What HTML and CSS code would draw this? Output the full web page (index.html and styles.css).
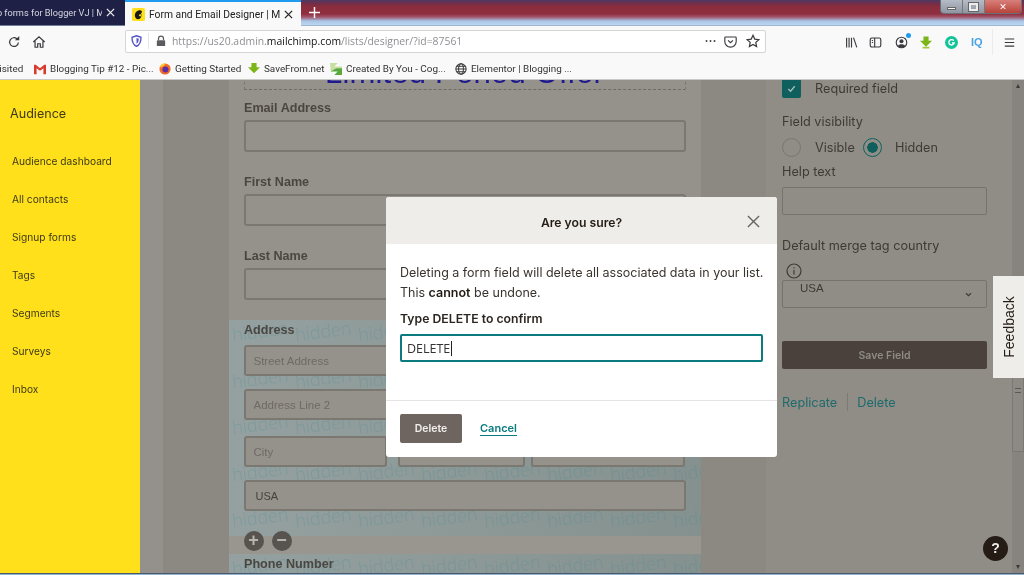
FILE: index.html
```html
<!DOCTYPE html>
<html lang="en">
<head>
<meta charset="utf-8">
<title>Form and Email Designer</title>
<link rel="stylesheet" href="styles.css">
</head>
<body>
<div class="page">
  <header class="chrome">
    <div class="tabstrip">
      <div class="tab-bg"><span class="tab-bg-title">Web forms for Blogger VJ | M</span><svg class="tab-x" viewBox="0 0 10 10"><path d="M1 1l8 8M9 1l-8 8"/></svg></div>
      <div class="tab-active">
        <svg class="favicon" viewBox="0 0 16 16"><rect width="16" height="16" rx="2" fill="#ffe01b"/><path d="M5 13c-2-2-2-6 0-8 2-2 6-3 7-1 1 1 0 2-1 2 1 2 1 5-1 7-1 1-4 1-5 0z" fill="#1c1a14"/><circle cx="10" cy="9" r="1.4" fill="#ffe01b"/></svg>
        <span class="tab-title">Form and Email Designer | Mail</span>
        <svg class="tab-x dark" viewBox="0 0 10 10"><path d="M1 1l8 8M9 1l-8 8"/></svg>
      </div>
      <svg class="newtab" viewBox="0 0 12 12"><path d="M6 0v12M0 6h12"/></svg>
      <div class="winctl">
        <span class="win win-min"><i></i></span>
        <span class="win win-max"><i></i></span>
        <span class="win win-close">✕</span>
      </div>
    </div>
    <div class="toolbar">
      <svg class="ico reload" viewBox="0 0 16 16"><path d="M13 8.500a5 5 0 1 1-1.500-4"/><path class="fill" d="M14 1v5H9z"/></svg>
      <svg class="ico home" viewBox="0 0 16 16"><path d="M1.500 8L8 2l6.500 6M3.500 7v7h3v-4h3v4h3V7"/></svg>
      <div class="urlbar">
        <svg class="shield" viewBox="0 0 14 16"><path d="M7 1l6 2c0 6-1 10-6 12C2 13 1 9 1 3z" fill="none" stroke="#5454c8" stroke-width="1.800"/><path d="M7 4l3 1c0 3-.5 5-3 6.500z" fill="#5454c8"/></svg>
        <span class="url-sep"></span>
        <svg class="lock" viewBox="0 0 12 14"><path d="M3 6V4a3 3 0 0 1 6 0v2" fill="none" stroke="#5c5c60" stroke-width="1.500"/><rect x="1" y="6" width="10" height="7" rx="1" fill="#5c5c60"/></svg>
        <span class="url"><span class="url-dim">https://us20.admin.</span>mailchimp.com<span class="url-dim">/lists/designer/?id=87561</span></span>
        <span class="url-end">
          <span class="dots">•••</span>
          <svg class="ico pocket" viewBox="0 0 16 16"><path d="M2 2.500h12a1 1 0 0 1 1 1V8a7 7 0 0 1-14 0V3.500a1 1 0 0 1 1-1zM5 6.500l3 3 3-3"/></svg>
          <svg class="ico star" viewBox="0 0 16 16"><path d="M8 1.500l2 4.300 4.700.6-3.500 3.200.9 4.700L8 12l-4.100 2.300.9-4.700-3.500-3.200 4.700-.6z"/></svg>
        </span>
      </div>
      <div class="tools">
        <svg class="ico tool-lib" viewBox="0 0 16 16"><path d="M2 2v12M5 2v12M8 2v12M10.500 2l4 12"/></svg>
        <svg class="ico tool-side" viewBox="0 0 16 16"><rect x="1.500" y="2.500" width="13" height="11" rx="2"/><path d="M7 2.500v11M3.500 5.500h1.500M3.500 8h1.500"/></svg>
        <span class="tool-avatar">
          <svg class="ico" viewBox="0 0 16 16"><circle cx="8" cy="8" r="6.500"/><circle class="fill" cx="8" cy="6.500" r="2.500"/><path class="fill" d="M3.500 12.500c1-3 8-3 9 0-2 2-7 2-9 0z"/></svg>
          <i class="badge-dot"></i>
        </span>
        <svg class="tool-green" viewBox="0 0 14 14"><path d="M4 0h6v5h4l-7 7-7-7h4z" fill="#7cb518"/><rect x="3" y="12" width="8" height="2" fill="#9ccc3c"/></svg>
        <span class="tool-gram"><svg viewBox="0 0 10 10"><path d="M7.500 3A3 3 0 1 0 8 5.500H5.500" fill="none" stroke="#fff" stroke-width="1.500"/></svg></span>
        <span class="tool-iq">IQ</span>
        <span class="tool-sep"></span>
        <svg class="ico tool-menu" viewBox="0 0 14 14"><path d="M1 2.500h12M1 7h12M1 11.500h12"/></svg>
      </div>
    </div>
    <nav class="bookmarks">
      <span class="bm bm-visited">Visited</span>
      <span class="bm bm-blog"><svg class="bm-ico" viewBox="0 0 14 12"><path d="M0 1h2l5 4 5-4h2v11h-3V5L7 8 3 5v7H0z" fill="#d93a2b"/></svg>Blogging Tip #12 - Pic...</span>
      <span class="bm bm-start"><svg class="bm-ico" viewBox="0 0 14 14"><circle cx="7" cy="7" r="6.500" fill="#f26a21"/><circle cx="7.500" cy="7.500" r="3.500" fill="#5a2ea6"/><path d="M1 5c1-3 4-5 7-4.500L6 3 3 5z" fill="#ffc83a"/></svg>Getting Started</span>
      <span class="bm bm-save"><svg class="bm-ico" viewBox="0 0 14 14"><path d="M4 0h6v5h4l-7 7-7-7h4z" fill="#7cb518"/></svg>SaveFrom.net</span>
      <span class="bm bm-made"><svg class="bm-ico" viewBox="0 0 14 14"><path d="M0 0h9L5 4h9v2H6L1 11z" fill="#c6e0a0"/><path d="M14 14H5l4-4H1l6-4 7 0z" fill="#58a83c"/></svg>Created By You - Cog...</span>
      <span class="bm bm-el"><svg class="bm-ico" viewBox="0 0 14 14"><g fill="none" stroke="#3a3a3a" stroke-width="1.200"><circle cx="7" cy="7" r="6"/><ellipse cx="7" cy="7" rx="2.800" ry="6"/><path d="M1 7h12M2 3.800h10M2 10.200h10"/></g></svg>Elementor | Blogging ...</span>
    </nav>
  </header>

  <main class="app">
    <aside class="side">
      <h2 class="side-title">Audience</h2>
      <ul class="side-list">
        <li>Audience dashboard</li>
        <li>All contacts</li>
        <li>Signup forms</li>
        <li>Tags</li>
        <li>Segments</li>
        <li>Surveys</li>
        <li>Inbox</li>
      </ul>
    </aside>
    <div class="gutter"></div>
    <section class="canvas">
      <form class="form">
        <div class="form-head">Limited Period Offer</div>
        <div class="field"><label class="flabel">Email Address</label><input class="finput" type="text"></div>
        <div class="field"><label class="flabel">First Name</label><input class="finput" type="text"></div>
        <div class="field last"><label class="flabel">Last Name</label><input class="finput" type="text"></div>
        <div class="hidden-block addr">
          <div class="wm">
            <span>hidden</span><span>hidden</span><span>hidden</span><span>hidden</span><span>hidden</span><span>hidden</span><span>hidden</span><span>hidden</span>
            <span>hidden</span><span>hidden</span><span>hidden</span><span>hidden</span><span>hidden</span><span>hidden</span><span>hidden</span><span>hidden</span>
            <span>hidden</span><span>hidden</span><span>hidden</span><span>hidden</span><span>hidden</span><span>hidden</span><span>hidden</span><span>hidden</span>
            <span>hidden</span><span>hidden</span><span>hidden</span><span>hidden</span><span>hidden</span><span>hidden</span><span>hidden</span><span>hidden</span>
            <span>hidden</span><span>hidden</span><span>hidden</span><span>hidden</span><span>hidden</span><span>hidden</span><span>hidden</span><span>hidden</span>
          </div>
          <label class="flabel addr-label">Address</label>
          <input class="finput addr-in first" type="text" placeholder="Street Address">
          <input class="finput addr-in second" type="text" placeholder="Address Line 2">
          <div class="addr-row">
            <input class="finput addr-in" type="text" placeholder="City">
            <input class="finput addr-in" type="text">
            <input class="finput addr-in" type="text">
          </div>
          <input class="finput addr-in country" type="text" value="USA">
        </div>
        <div class="plusminus">
          <span class="pm">+</span><span class="pm">−</span>
        </div>
        <div class="hidden-block phone">
          <div class="wm">
            <span>hidden</span><span>hidden</span><span>hidden</span><span>hidden</span><span>hidden</span><span>hidden</span><span>hidden</span><span>hidden</span>
          </div>
          <label class="flabel addr-label">Phone Number</label>
        </div>
      </form>
    </section>
    <aside class="panel">
      <div class="check-row">
        <span class="checkbox"><svg viewBox="0 0 12 12"><path d="M2.500 6.500l2.500 2.500 4.500-5.500"/></svg></span>
        <span class="ptext">Required field</span>
      </div>
      <div class="ptext vis-label">Field visibility</div>
      <div class="radio-row">
        <span class="radio"></span><span class="ptext r1">Visible</span>
        <span class="radio on"></span><span class="ptext r2">Hidden</span>
      </div>
      <div class="ptext help-label">Help text</div>
      <div class="pinput"></div>
      <div class="ptext merge-label">Default merge tag country</div>
      <svg class="info" viewBox="0 0 16 16"><circle cx="8" cy="8" r="7"/><path d="M8 7v4.500M8 4.200v1.300"/></svg>
      <div class="pselect"><span>USA</span><svg viewBox="0 0 8 6"><path d="M1 1.500l3 3 3-3"/></svg></div>
      <div class="save">Save Field</div>
      <div class="plinks"><span class="plink">Replicate</span><i class="plink-sep"></i><span class="plink">Delete</span></div>
    </aside>
    <div class="scrollbar">
      <span class="sb-arrow">▴</span>
      <div class="sb-thumb"><i></i></div>
      <span class="sb-arrow">▾</span>
    </div>

    <div class="feedback"><span>Feedback</span></div>
    <div class="helpbtn">?</div>
    <div class="modal">
      <div class="modal-head">
        <span class="modal-title">Are you sure?</span>
        <svg class="modal-x" viewBox="0 0 14 14"><path d="M1 1l12 12M13 1L1 13"/></svg>
      </div>
      <div class="modal-body">
        <p class="modal-text">Deleting a form field will delete all associated data in your list.<br>This <strong>cannot</strong> be undone.</p>
        <div class="modal-label">Type DELETE to confirm</div>
        <div class="modal-input">DELETE<i class="caret"></i></div>
      </div>
      <div class="modal-foot">
        <span class="btn-delete">Delete</span>
        <span class="btn-cancel">Cancel</span>
      </div>
    </div>
  </main>
  <div class="taskbar"></div>
</div>
</body>
</html>
```
FILE: styles.css
```css
* { box-sizing: border-box; }
html, body { margin: 0; padding: 0; background: #94908a; }
.page { width: 1024px; height: 575px; overflow: hidden; display: flex; flex-direction: column; filter: blur(.45px); }

/* browser chrome */
.chrome { flex: none; height: 80px; font-family: "Roboto", "Liberation Sans", sans-serif; color: #2a2a2e; background: #f9f9fa; }
.tabstrip { height: 26px; display: flex; align-items: stretch; position: relative; overflow: hidden;
  background: linear-gradient(to bottom, #4a3a66 0, #6e2f4a 3px, #8b2d3c 7px, #8f2f40 14px, #a0566c 17px, #a9c6e6 21px, #bcd6f0 25px, #7f98b4 26px); }
.tab-bg { width: 125px; background: #1f2045; color: #d6d6e2; display: flex; align-items: center; font-size: 9.200px; padding-right: 10px; border-bottom: 1px solid #6d7f9a; }
.tab-bg-title { flex: 1; white-space: nowrap; overflow: hidden; text-indent: -16px; }
.tab-x { width: 9px; height: 9px; margin-left: 4px; flex: none; fill: none; stroke: #eee; stroke-width: 1.400; }
.tab-x.dark { stroke: #222; }
.tab-active { width: 176px; background: #f9f9fa; border-top: 2px solid #1f9cf0; display: flex; align-items: center; padding: 0 8px 0 7px; }
.favicon { width: 13px; height: 13px; flex: none; margin-right: 4px; }
.tab-title { flex: 1; font-size: 10.300px; white-space: nowrap; overflow: hidden; color: #222; }
.newtab { width: 11px; height: 11px; margin: 7px 0 0 8px; fill: none; stroke: #fff; stroke-width: 1.600; }
.winctl { margin-left: auto; margin-right: 2px; width: 82px; height: 14px; display: flex; border: 1px solid #6a6f78; border-top: 0; border-radius: 0 0 4px 4px; overflow: hidden; }
.win { display: flex; align-items: center; justify-content: center; background: linear-gradient(#b6bcc6, #8f96a2); }
.win-min { width: 22px; border-right: 1px solid #777; }
.win-min i { width: 9px; height: 3px; background: #f4f4f4; border: 1px solid #666; margin-top: 4px; }
.win-max { width: 22px; border-right: 1px solid #777; }
.win-max i { width: 9px; height: 8px; border: 2px solid #ececec; outline: 1px solid #666; }
.win-close { flex: 1; background: linear-gradient(#d8807a, #b8433a); color: #fff; font-size: 9px; font-weight: 700; font-family: "DejaVu Sans", sans-serif; }

.toolbar { height: 32px; display: flex; align-items: center; background: #f9f9fa; }
.ico { fill: none; stroke: #3b3b3f; stroke-width: 1.400; }
.ico .fill { fill: #3b3b3f; stroke: none; }
.reload { width: 14px; height: 14px; margin-left: 7px; flex: none; }
.home { width: 14px; height: 14px; margin-left: 11px; flex: none; }
.urlbar { width: 641px; height: 23px; margin-left: 79px; flex: none; background: #fff; border: 1px solid #d4d4d6; border-radius: 2px; display: flex; align-items: center; padding-left: 5px; margin-top: -2px; }
.shield { width: 11px; height: 12px; flex: none; }
.url-sep { width: 1px; height: 16px; background: #e6e6e8; margin: 0 7px 0 6px; flex: none; }
.lock { width: 10px; height: 12px; flex: none; margin-right: 6px; }
.url { font-size: 10.400px; color: #111; white-space: nowrap; font-family: "Open Sans", sans-serif; }
.url-dim { color: #8f8f94; }
.url-end { margin-left: auto; display: flex; align-items: center; padding-right: 5px; }
.dots { font-size: 9px; color: #444; letter-spacing: 1px; margin-right: 7px; }
.pocket { width: 13px; height: 13px; margin-right: 9px; }
.star { width: 14px; height: 14px; }
.tools { display: flex; align-items: center; margin-left: 79px; flex: 1; height: 100%; }
.tool-lib { width: 13px; height: 13px; flex: none; }
.tool-side { width: 13px; height: 13px; margin-left: 11px; flex: none; }
.tool-avatar { position: relative; width: 13px; height: 13px; margin-left: 13px; flex: none; display: block; }
.tool-avatar svg { width: 13px; height: 13px; display: block; }
.badge-dot { position: absolute; right: -3px; top: -3px; width: 5px; height: 5px; border-radius: 50%; background: #1f9cf0; }
.tool-green { width: 12px; height: 13px; margin-left: 12px; flex: none; }
.tool-gram { width: 13px; height: 13px; border-radius: 50%; background: #15c39a; margin-left: 13px; flex: none; display: flex; align-items: center; justify-content: center; }
.tool-gram svg { width: 9px; height: 9px; }
.tool-iq { color: #4aa3e0; font: 700 11px "Liberation Sans", sans-serif; margin-left: 13px; width: 13px; flex: none; }
.tool-sep { width: 1px; height: 26px; background: #ececee; margin-left: 8px; flex: none; }
.tool-menu { width: 11px; height: 11px; margin-left: 11px; flex: none; stroke-width: 1.500; }

.bookmarks { height: 22px; display: flex; align-items: center; background: #f9f9fa; border-bottom: 1px solid #c9c9c6; font-size: 9.900px; color: #333; overflow: hidden; white-space: nowrap; }
.bm { display: flex; align-items: center; flex: none; }
.bm-ico { width: 12px; height: 12px; margin-right: 4px; flex: none; }
.bm-visited { width: 41px; margin-left: -7px; }
.bm-blog { width: 125px; }
.bm-start { width: 89px; }
.bm-save { width: 82px; }
.bm-made { width: 125px; }

/* app */
.app { flex: 1; min-height: 0; display: flex; position: relative; overflow: hidden; background: #94908a; }
.side { width: 140px; flex: none; background: #ffe01b; color: #3d3a18; font-family: "Inter", "Liberation Sans", sans-serif; padding-left: 10px; }
.side-title { margin: 25px 0 0; font-size: 12.600px; line-height: 18px; font-weight: 400; }
.side-list { list-style: none; margin: 31px 0 0 2px; padding: 0; font-size: 10.200px; line-height: 14px; }
.side-list li { height: 38px; }
.gutter { width: 23px; flex: none; background: #94918c; }
.canvas { width: 603px; flex: none; background: #8c8983; display: flex; justify-content: center; overflow: hidden; }
.form { width: 472px; flex: none; background: #95918b; font-family: "Liberation Sans", sans-serif; }
.form-head { height: 40px; margin: -30px 15px 9px; border-bottom: 1px dashed #6f6c67; border-left: 1px dashed #7a7772; border-right: 1px dashed #7a7772; text-align: center; color: #1e1a8e; font-size: 31px; line-height: 46px; white-space: nowrap; letter-spacing: .2px; }
.field { padding: 0 15px 21px; }
.field.last { padding-bottom: 20px; }
.flabel { display: block; padding-top: 1px; font-size: 12.600px; line-height: 16px; font-weight: 700; color: #4a4641; margin-bottom: 4px; margin-left: .5px; }
.finput { display: block; width: 100%; height: 32px; background: #95918b; border: 2px solid #7b7771; border-radius: 3px; padding: 0 8px; font: 11.500px "Liberation Sans", sans-serif; color: #45413c; outline: 0; }
.finput::placeholder { color: #6e6a65; opacity: 1; }
.hidden-block { position: relative; overflow: hidden; background: linear-gradient(to right, #94a1a0, #84918e); padding: 1px 15px 0; }
.hidden-block > label, .hidden-block > input, .hidden-block > div.addr-row { position: relative; }
.addr { height: 216px; }
.phone { height: 22px; }
.wm { position: absolute; left: 4px; top: -3px; display: grid; grid-template-columns: repeat(8, 63px); grid-auto-rows: 46.500px; color: rgba(60, 140, 160, .26); font: 300 18px/28px "Open Sans", sans-serif; white-space: nowrap; }
.wm span { display: block; width: 52px; transform: rotate(-7deg); }
.addr-label { margin-bottom: 7px; }
.addr-in { height: 31px; }
.country { padding-left: 10px; font-size: 11px; }
.first { margin-bottom: 13px; }
.second { margin-bottom: 16px; }
.addr-row { display: grid; grid-template-columns: 143px 127px 154px; column-gap: 11px; margin-bottom: 13px; }
.addr-row .addr-in:nth-child(3) { margin-left: -5px; width: 154px; }
.plusminus { position: relative; height: 18px; display: flex; gap: 8px; padding-left: 15px; background: #99958f; }
.pm { width: 20px; height: 20px; margin-top: -5px; border-radius: 50%; background: #57534e; color: #b8b4ae; font: 700 18px/19px "Liberation Sans", sans-serif; text-align: center; }

/* right panel */
.panel { width: 246px; flex: none; background: #908d87; padding: 0 0 0 16px; font-family: "Inter", "Liberation Sans", sans-serif; color: #3e3a35; position: relative; }
.ptext { font-size: 12.700px; line-height: 16px; white-space: nowrap; }
.check-row { display: flex; align-items: center; height: 19px; margin-top: -1px; }
.checkbox { width: 19px; height: 19px; background: #0f5f5e; border-radius: 2px; margin-right: 14px; display: flex; align-items: center; justify-content: center; }
.checkbox svg { width: 11px; height: 11px; fill: none; stroke: #a7bdb8; stroke-width: 1.500; }
.vis-label { margin-top: 16px; }
.radio-row { display: flex; align-items: center; height: 19px; margin-top: 8px; }
.radio { width: 19px; height: 19px; border-radius: 50%; border: 1px solid #7a7771; flex: none; }
.radio.on { border-color: #0f5f5e; border-width: 1.500px; position: relative; background: radial-gradient(circle, #0f5f5e 0 5px, transparent 5.500px); }
.r1 { margin-left: 14px; width: 48px; }
.r2 { margin-left: 13px; }
.help-label { margin-top: 7px; }
.pinput { width: 205px; height: 28px; border: 1px solid #76736d; border-radius: 2px; margin-top: 7px; }
.merge-label { margin-top: 23px; }
.info { display: block; width: 16px; height: 16px; margin: 9px 0 0 4px; fill: none; stroke: #3e3a35; stroke-width: 1.200; }
.pselect { width: 205px; height: 28px; margin-top: 1px; border: 1px solid #76736d; border-radius: 2px; display: flex; justify-content: space-between; padding: 0 14px 0 17px; font: 11.500px/14px "Liberation Sans", sans-serif; }
.pselect svg { width: 7px; height: 5px; margin-top: 11px; fill: none; stroke: #3e3a35; stroke-width: 1.400; }
.save { width: 205px; height: 28px; margin-top: 33px; background: #4a403c; border-radius: 2px; color: #8f8a85; font-size: 10.500px; font-weight: 600; line-height: 30px; text-align: center; }
.plinks { display: flex; align-items: center; margin-top: 23px; height: 20px; color: #1f6a6c; font-size: 12.700px; }
.plink-sep { width: 1px; height: 18px; background: #7d7a74; margin: 0 9px 0 10px; }
.scrollbar { flex: 1; background: #878480; display: flex; flex-direction: column; align-items: center; justify-content: space-between; color: #3a3a3a; font-size: 8px; line-height: 12px; position: relative; }
.sb-thumb { position: absolute; top: 248px; left: 0; right: 0; height: 124px; background: #8d8a85; border: 1px solid #7b7873; display: flex; justify-content: center; align-items: center; }
.sb-thumb i { width: 6px; height: 5px; border-top: 1px solid #5a5854; border-bottom: 1px solid #5a5854; }

.feedback { position: absolute; left: 993px; top: 196px; width: 31px; height: 102px; background: #eeede9; display: flex; align-items: center; justify-content: center; }
.feedback span { transform: rotate(-90deg); font: 14px "Liberation Sans", sans-serif; color: #241c15; white-space: nowrap; }
.helpbtn { position: absolute; left: 983px; top: 456px; width: 25px; height: 25px; border-radius: 50%; background: #241c15; color: #f0efec; font: 700 14px/25px "Liberation Sans", sans-serif; text-align: center; }

.modal { position: absolute; left: 386px; top: 117px; width: 391px; height: 260px; background: #fff; border-radius: 3px; font-family: "Inter", "Liberation Sans", sans-serif; color: #241c15; display: flex; flex-direction: column; overflow: hidden; }
.modal-head { height: 47px; flex: none; background: #eeede9; display: flex; align-items: center; justify-content: center; position: relative; }
.modal-title { font-size: 12.200px; font-weight: 600; margin-top: 3px; }
.modal-x { position: absolute; right: 17px; top: 18px; width: 13px; height: 13px; fill: none; stroke: #6b6560; stroke-width: 1.500; }
.modal-body { flex: 1; padding: 0 14px; }
.modal-text { margin: 19px 0 0; font-size: 12.500px; line-height: 20px; color: #3a342e; white-space: nowrap; }
.modal-text strong { font-weight: 600; color: #241c15; }
.modal-label { font-size: 12.250px; font-weight: 600; line-height: 16px; margin-top: 8px; color: #2c2620; }
.modal-input { height: 28px; margin-top: 7px; border: 2px solid #0a7b7e; border-radius: 2px; padding-left: 5px; font: 12.500px/23px "Open Sans", sans-serif; color: #333; display: flex; align-items: center; }
.caret { width: 1px; height: 15px; background: #222; margin-left: 1px; }
.modal-foot { height: 57px; flex: none; border-top: 1px solid #e6e5e1; display: flex; align-items: flex-start; padding: 13px 14px 0; }
.btn-delete { width: 62px; height: 29px; background: #6e6560; border-radius: 2px; color: #f1efec; font-size: 10.500px; font-weight: 600; line-height: 30px; text-align: center; }
.btn-cancel { margin: 7px 0 0 18px; color: #0a7b7e; font-size: 11px; font-weight: 600; line-height: 14px; border-bottom: 1px solid #0a7b7e; }
.taskbar { flex: none; height: 2px; background: linear-gradient(to bottom, #4a5a6c 0 1px, #8fb4d0 1px); }
```
